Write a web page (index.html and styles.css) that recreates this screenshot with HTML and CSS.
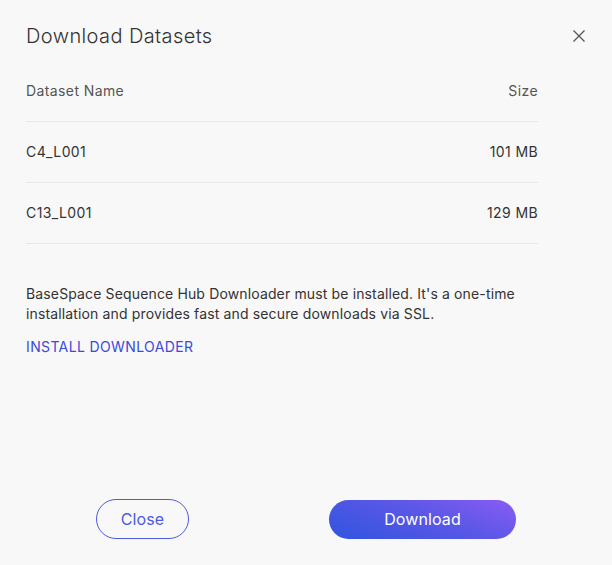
FILE: index.html
```html
<!DOCTYPE html>
<html>
<head>
<meta charset="utf-8">
<link rel="stylesheet" href="styles.css">
</head>
<body>
<div class="dialog">
  <div class="header">
    <h1 class="title">Download Datasets</h1>
    <button class="close-x" aria-label="Close">
      <svg width="14" height="14" viewBox="0 0 14 14"><path d="M1.5 1.5 L12.5 12.5 M12.5 1.5 L1.5 12.5" stroke="#555" stroke-width="1.3" fill="none"/></svg>
    </button>
  </div>
  <div class="table">
    <div class="row head"><span>Dataset Name</span><span>Size</span></div>
    <div class="row"><span>C4_L001</span><span>101 MB</span></div>
    <div class="row"><span>C13_L001</span><span>129 MB</span></div>
  </div>
  <p class="note">BaseSpace Sequence Hub Downloader must be installed. It's a one-time installation and provides fast and secure downloads via SSL.</p>
  <a class="link" href="#">INSTALL DOWNLOADER</a>
  <div class="footer">
    <button class="btn btn-outline">Close</button>
    <button class="btn btn-primary">Download</button>
  </div>
</div>
</body>
</html>
```
FILE: styles.css
```css
* { box-sizing: border-box; }
html, body {
  margin: 0;
  padding: 0;
  background: #f8f8f8;
  font-family: Inter, "Noto Sans", sans-serif;
  color: #333;
}
.dialog {
  width: 612px;
  height: 565px;
  padding: 24px 74px 0 26px;
  position: relative;
  display: flex;
  flex-direction: column;
}
.header {
  height: 24px;
  display: flex;
  align-items: center;
}
.title {
  margin: 0;
  font-size: 20px;
  font-weight: 300;
  line-height: 24px;
  color: #333;
  letter-spacing: 0.4px;
}
.close-x {
  position: absolute;
  top: 29px;
  right: 26px;
  width: 14px;
  height: 14px;
  padding: 0;
  border: 0;
  background: none;
  display: flex;
}
.table {
  margin-top: 13px;
}
.row {
  display: flex;
  justify-content: space-between;
  align-items: center;
  height: 61px;
  border-bottom: 1px solid #e8e8e8;
  font-size: 14px;
  color: #333;
  padding-bottom: 1px;
  letter-spacing: 0.4px;
}
.row.head {
  height: 61px;
  color: #555;
}
.note {
  margin: 40px 0 0 0;
  font-size: 14px;
  line-height: 20px;
  color: #333;
  width: 520px;
  letter-spacing: 0.14px;
}
.link {
  margin-top: 13px;
  font-size: 14px;
  line-height: 20px;
  color: #3b4ad9;
  text-decoration: none;
  letter-spacing: 0.37px;
}
.footer {
  margin-top: auto;
  margin-left: -26px;
  margin-right: -74px;
  display: flex;
  justify-content: center;
  align-items: center;
  gap: 140px;
  height: 40px;
  margin-bottom: 26px;
}
.btn {
  font-family: Inter, "Noto Sans", sans-serif;
  font-size: 16px;
  height: 40px;
  border-radius: 20px;
  cursor: pointer;
  letter-spacing: 0.1px;
}
.btn-outline {
  width: 93px;
  background: transparent;
  border: 1px solid #4a5be0;
  color: #4a5be0;
}
.btn-primary {
  width: 187px;
  height: 39px;
  border: 0;
  color: #fff;
  background: linear-gradient(20deg, #2f55df 0%, #5a57e6 55%, #8a5cf4 100%);
}
```
